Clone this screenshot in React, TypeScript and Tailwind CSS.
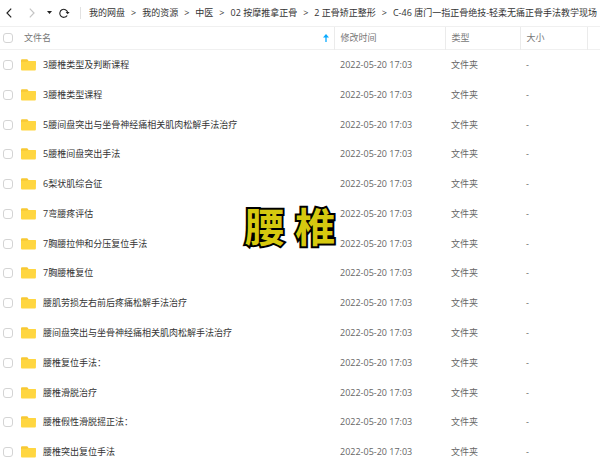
import { Fragment, useState } from 'react';

const breadcrumbs = [
  '我的网盘',
  '我的资源',
  '中医',
  '02 按摩推拿正骨',
  '2 正骨矫正整形',
  'C-46 唐门一指正骨绝技-轻柔无痛正骨手法教学现场',
];

const folders = [
  '3腰椎类型及判断课程',
  '3腰椎类型课程',
  '5腰间盘突出与坐骨神经痛相关肌肉松解手法治疗',
  '5腰椎间盘突出手法',
  '6梨状肌综合征',
  '7弯腰疼评估',
  '7胸腰拉伸和分压复位手法',
  '7胸腰椎复位',
  '腰肌劳损左右前后疼痛松解手法治疗',
  '腰间盘突出与坐骨神经痛相关肌肉松解手法治疗',
  '腰椎复位手法：',
  '腰椎滑脱治疗',
  '腰椎假性滑脱摇正法：',
  '腰椎突出复位手法',
];

function FolderIcon() {
  return (
    <svg viewBox="0 0 15 12" className="h-3 w-[15px] shrink-0" aria-hidden="true">
      <path
        d="M0 1.6C0 .8.5.3 1.3.3h4.3c.5 0 .8.1 1.1.5l.9 1.1h6c.8 0 1.3.5 1.3 1.3v3H0z"
        fill="#f8c934"
      />
      <path
        d="M0 3.6c0-.6.4-.9 1-.9h4.6c.5 0 .8-.1 1.1-.4l.4-.4h6.5c.8 0 1.3.5 1.3 1.3v7c0 .8-.5 1.3-1.3 1.3H1.3C.5 11.5 0 11 0 10.2z"
        fill="#ffd640"
      />
    </svg>
  );
}

interface CheckboxProps {
  label: string;
  checked: boolean;
  onChange: () => void;
}

function Checkbox({ label, checked, onChange }: CheckboxProps) {
  return (
    <input
      type="checkbox"
      aria-label={label}
      checked={checked}
      onChange={onChange}
      className="size-[10px] shrink-0 appearance-none rounded-[3px] border border-[#d4d4d4] bg-white checked:border-[#09aaff] checked:bg-[#09aaff]"
    />
  );
}

function Toolbar() {
  return (
    <header className="flex h-[27px] shrink-0 items-center overflow-hidden border-b border-[#f0f0f0] pb-px whitespace-nowrap text-[#333]">
      <button type="button" aria-label="后退" className="ml-[6px]">
        <svg viewBox="0 0 6 10" className="h-[10px] w-[6px]" fill="none">
          <path d="M5.2.7 1 5l4.2 4.3" stroke="#222" strokeWidth="1.2" />
        </svg>
      </button>
      <button type="button" aria-label="前进" className="ml-[17px]">
        <svg viewBox="0 0 6 10" className="h-[10px] w-[6px]" fill="none">
          <path d="M.8.7 5 5 .8 9.3" stroke="#c4c4c4" strokeWidth="1.2" />
        </svg>
      </button>
      <button type="button" aria-label="历史记录" className="ml-[12px]">
        <svg viewBox="0 0 5 3" className="h-[3px] w-[5px]">
          <path d="M0 0h5L2.5 3z" fill="#222" />
        </svg>
      </button>
      <button type="button" aria-label="刷新" className="ml-[7px]">
        <svg viewBox="0 0 11 10" className="h-[10px] w-[11px]" fill="none">
          <path d="M8.2 7.5A4 4 0 1 1 8.7 4.3" stroke="#222" strokeWidth="1.1" />
          <path d="M6.6 3.9h4L8.7 6.2z" fill="#222" />
        </svg>
      </button>
      <nav
        aria-label="路径"
        className="ml-[10px] flex h-3 items-center gap-[6px] border-l border-[#e2e2e2] pl-2"
      >
        {breadcrumbs.map((name, i) => (
          <Fragment key={name}>
            {i > 0 && <span aria-hidden="true">&gt;</span>}
            <a href="#">{name}</a>
          </Fragment>
        ))}
      </nav>
    </header>
  );
}

export default function App() {
  const [selected, setSelected] = useState<string[]>([]);
  const allSelected = selected.length === folders.length;

  const toggle = (name: string) => {
    setSelected((prev) =>
      prev.includes(name) ? prev.filter((n) => n !== name) : [...prev, name]
    );
  };

  return (
    <div className="relative flex h-screen flex-col bg-white font-['Open_Sans','Noto_Sans_CJK_SC',sans-serif] text-[9px] leading-3">
      <Toolbar />
      <main className="min-h-0 flex-1">
        <table className="h-full w-full table-fixed border-collapse text-left whitespace-nowrap text-[#666]">
          <colgroup>
            <col />
            <col className="w-[111px]" />
            <col className="w-[75px]" />
            <col className="w-[67px]" />
            <col className="w-[13px]" />
          </colgroup>
          <thead className="text-[#777]">
            <tr className="h-[22px] border-b border-[#f0f0f0]">
              <th className="border-r border-[#ebebeb] p-0 font-normal">
                <div className="flex items-center pr-[5px] pl-[3px]">
                  <Checkbox
                    label="全选"
                    checked={allSelected}
                    onChange={() => setSelected(allSelected ? [] : folders)}
                  />
                  <span className="ml-[11px] flex-1">文件名</span>
                  <svg viewBox="0 0 6 8" className="h-2 w-[6px]" fill="none" aria-hidden="true">
                    <path d="M3 8V2" stroke="#09aaff" strokeWidth="1.3" />
                    <path d="M3 0 6 3.5H0z" fill="#09aaff" />
                  </svg>
                </div>
              </th>
              <th className="border-r border-[#ebebeb] py-0 pr-0 pl-[6px] font-normal">修改时间</th>
              <th className="border-r border-[#ebebeb] py-0 pr-0 pl-[6px] font-normal">类型</th>
              <th className="border-r border-[#ebebeb] py-0 pr-0 pl-[6px] font-normal">大小</th>
              <th className="p-0" />
            </tr>
          </thead>
          <tbody>
            {folders.map((name) => (
              <tr key={name}>
                <td className="p-0">
                  <div className="flex items-center pl-[3px] text-[#333]">
                    <Checkbox
                      label={name}
                      checked={selected.includes(name)}
                      onChange={() => toggle(name)}
                    />
                    <span className="ml-2 flex items-center gap-[7px]">
                      <FolderIcon />
                      <span>{name}</span>
                    </span>
                  </div>
                </td>
                <td className="py-0 pr-0 pl-[6px]">2022-05-20 17:03</td>
                <td className="py-0 pr-0 pl-[6px]">文件夹</td>
                <td className="py-0 pr-0 pl-[6px]">-</td>
                <td className="p-0" />
              </tr>
            ))}
          </tbody>
        </table>
      </main>
      {/* caption laid over the list */}
      <div className="pointer-events-none absolute inset-x-0 top-[202px] pr-5 text-center text-[40px] leading-[50px] font-bold text-[#d6c90f] [-webkit-text-stroke:4px_#000] [paint-order:stroke_fill]">
        腰 椎
      </div>
    </div>
  );
}
